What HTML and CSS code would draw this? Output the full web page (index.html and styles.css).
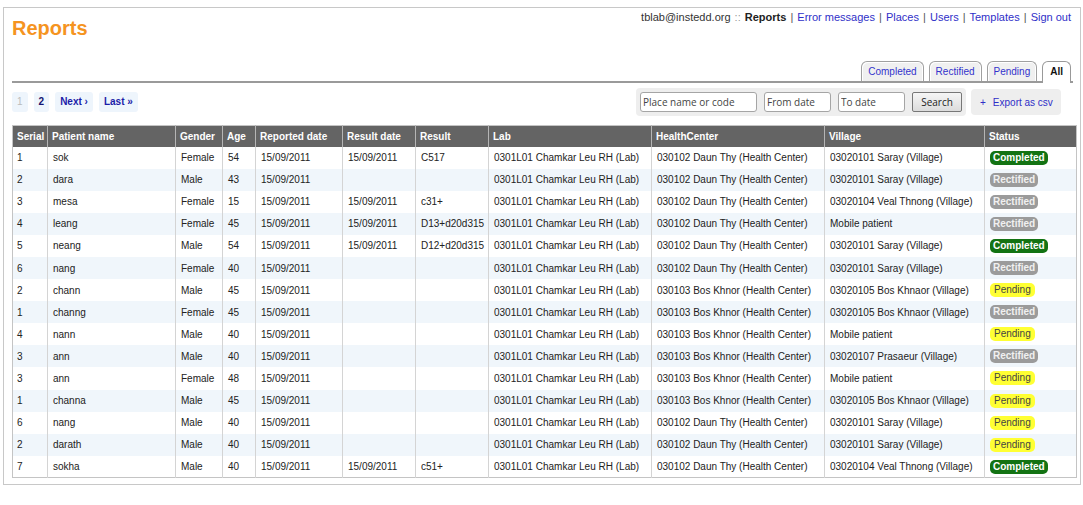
FILE: index.html
```html
<!DOCTYPE html>
<html>
<head>
<meta charset="utf-8">
<title>Reports</title>
<link rel="stylesheet" href="styles.css">
</head>
<body>
<div class="page">
  <div class="top">
    <h1 class="title">Reports</h1>
    <div class="userbar">
      <span class="user">tblab@instedd.org</span> <span class="sep2">::</span>
      <b class="current">Reports</b> <span class="sep">|</span>
      <a href="#">Error messages</a> <span class="sep">|</span>
      <a href="#">Places</a> <span class="sep">|</span>
      <a href="#">Users</a> <span class="sep">|</span>
      <a href="#">Templates</a> <span class="sep">|</span>
      <a href="#">Sign out</a>
    </div>
  </div>
  <div class="tabs">
    <a class="tab" href="#">Completed</a>
    <a class="tab" href="#">Rectified</a>
    <a class="tab" href="#">Pending</a>
    <a class="tab active" href="#">All</a>
  </div>
  <div class="toolbar">
    <div class="pager">
      <span class="pg disabled">1</span>
      <a class="pg cur" href="#">2</a>
      <a class="pg" href="#">Next ›</a>
      <a class="pg" href="#">Last »</a>
    </div>
    <div class="search">
      <input class="inp w-place" type="text" placeholder="Place name or code">
      <input class="inp w-date" type="text" placeholder="From date">
      <input class="inp w-date2" type="text" placeholder="To date">
      <button class="btn" type="button">Search</button>
    </div>
    <a class="export" href="#"><span class="plus">+</span>Export as csv</a>
  </div>
  <table class="grid">
    <colgroup>
      <col class="c-serial"><col class="c-name"><col class="c-gender"><col class="c-age"><col class="c-rep"><col class="c-resd"><col class="c-res"><col class="c-lab"><col class="c-hc"><col class="c-vil"><col class="c-st">
    </colgroup>
    <thead>
      <tr><th>Serial</th><th>Patient name</th><th>Gender</th><th>Age</th><th>Reported date</th><th>Result date</th><th>Result</th><th>Lab</th><th>HealthCenter</th><th>Village</th><th>Status</th></tr>
    </thead>
    <tbody>
      <tr><td>1</td><td>sok</td><td>Female</td><td>54</td><td>15/09/2011</td><td>15/09/2011</td><td>C517</td><td>0301L01 Chamkar Leu RH (Lab)</td><td>030102 Daun Thy (Health Center)</td><td>03020101 Saray (Village)</td><td><span class="badge completed">Completed</span></td></tr>
      <tr><td>2</td><td>dara</td><td>Male</td><td>43</td><td>15/09/2011</td><td></td><td></td><td>0301L01 Chamkar Leu RH (Lab)</td><td>030102 Daun Thy (Health Center)</td><td>03020101 Saray (Village)</td><td><span class="badge rectified">Rectified</span></td></tr>
      <tr><td>3</td><td>mesa</td><td>Female</td><td>15</td><td>15/09/2011</td><td>15/09/2011</td><td>c31+</td><td>0301L01 Chamkar Leu RH (Lab)</td><td>030102 Daun Thy (Health Center)</td><td>03020104 Veal Thnong (Village)</td><td><span class="badge rectified">Rectified</span></td></tr>
      <tr><td>4</td><td>leang</td><td>Female</td><td>45</td><td>15/09/2011</td><td>15/09/2011</td><td>D13+d20d315</td><td>0301L01 Chamkar Leu RH (Lab)</td><td>030102 Daun Thy (Health Center)</td><td>Mobile patient</td><td><span class="badge rectified">Rectified</span></td></tr>
      <tr><td>5</td><td>neang</td><td>Male</td><td>54</td><td>15/09/2011</td><td>15/09/2011</td><td>D12+d20d315</td><td>0301L01 Chamkar Leu RH (Lab)</td><td>030102 Daun Thy (Health Center)</td><td>03020101 Saray (Village)</td><td><span class="badge completed">Completed</span></td></tr>
      <tr><td>6</td><td>nang</td><td>Female</td><td>40</td><td>15/09/2011</td><td></td><td></td><td>0301L01 Chamkar Leu RH (Lab)</td><td>030102 Daun Thy (Health Center)</td><td>03020101 Saray (Village)</td><td><span class="badge rectified">Rectified</span></td></tr>
      <tr><td>2</td><td>chann</td><td>Male</td><td>45</td><td>15/09/2011</td><td></td><td></td><td>0301L01 Chamkar Leu RH (Lab)</td><td>030103 Bos Khnor (Health Center)</td><td>03020105 Bos Khnaor (Village)</td><td><span class="badge pending">Pending</span></td></tr>
      <tr><td>1</td><td>channg</td><td>Female</td><td>45</td><td>15/09/2011</td><td></td><td></td><td>0301L01 Chamkar Leu RH (Lab)</td><td>030103 Bos Khnor (Health Center)</td><td>03020105 Bos Khnaor (Village)</td><td><span class="badge rectified">Rectified</span></td></tr>
      <tr><td>4</td><td>nann</td><td>Male</td><td>40</td><td>15/09/2011</td><td></td><td></td><td>0301L01 Chamkar Leu RH (Lab)</td><td>030103 Bos Khnor (Health Center)</td><td>Mobile patient</td><td><span class="badge pending">Pending</span></td></tr>
      <tr><td>3</td><td>ann</td><td>Male</td><td>40</td><td>15/09/2011</td><td></td><td></td><td>0301L01 Chamkar Leu RH (Lab)</td><td>030103 Bos Khnor (Health Center)</td><td>03020107 Prasaeur (Village)</td><td><span class="badge rectified">Rectified</span></td></tr>
      <tr><td>3</td><td>ann</td><td>Female</td><td>48</td><td>15/09/2011</td><td></td><td></td><td>0301L01 Chamkar Leu RH (Lab)</td><td>030103 Bos Khnor (Health Center)</td><td>Mobile patient</td><td><span class="badge pending">Pending</span></td></tr>
      <tr><td>1</td><td>channa</td><td>Male</td><td>45</td><td>15/09/2011</td><td></td><td></td><td>0301L01 Chamkar Leu RH (Lab)</td><td>030103 Bos Khnor (Health Center)</td><td>03020105 Bos Khnaor (Village)</td><td><span class="badge pending">Pending</span></td></tr>
      <tr><td>6</td><td>nang</td><td>Male</td><td>40</td><td>15/09/2011</td><td></td><td></td><td>0301L01 Chamkar Leu RH (Lab)</td><td>030102 Daun Thy (Health Center)</td><td>03020101 Saray (Village)</td><td><span class="badge pending">Pending</span></td></tr>
      <tr><td>2</td><td>darath</td><td>Male</td><td>40</td><td>15/09/2011</td><td></td><td></td><td>0301L01 Chamkar Leu RH (Lab)</td><td>030102 Daun Thy (Health Center)</td><td>03020101 Saray (Village)</td><td><span class="badge pending">Pending</span></td></tr>
      <tr><td>7</td><td>sokha</td><td>Male</td><td>40</td><td>15/09/2011</td><td>15/09/2011</td><td>c51+</td><td>0301L01 Chamkar Leu RH (Lab)</td><td>030102 Daun Thy (Health Center)</td><td>03020104 Veal Thnong (Village)</td><td><span class="badge completed">Completed</span></td></tr>
    </tbody>
  </table>
</div>
</body>
</html>
```
FILE: styles.css
```css
* { box-sizing: border-box; }
body {
  margin: 0;
  background: #fff;
  font-family: "Liberation Sans", Arial, sans-serif;
  font-size: 10px;
  color: #222;
}
a { text-decoration: none; }

.page {
  margin: 7px 2px 0 3px;
  height: 478px;
  border: 1px solid #c8c8c8;
  padding: 0 3px 0 8px;
}

.top {
  display: flex;
  justify-content: space-between;
  align-items: flex-start;
  height: 53px;
}
.title {
  margin: 9px 0 0 0;
  font-size: 20px;
  line-height: 22px;
  font-weight: bold;
  color: #f5941f;
}
.userbar {
  margin-top: 2px;
  padding-right: 6px;
  font-size: 11px;
  line-height: 14px;
  color: #333;
  white-space: nowrap;
}
.userbar a { color: #2f2fc8; }
.userbar .current { color: #222; }
.userbar .sep { color: #555; padding: 0 1px; }
.userbar .sep2 { color: #999; padding: 0 1px; }

.tabs {
  display: flex;
  justify-content: flex-end;
  gap: 5px;
  height: 22px;
  margin-right: 4px;
  padding-right: 2px;
  border-bottom: 2px solid #9a9a9a;
}
.tab {
  display: block;
  height: 20px;
  line-height: 19px;
  padding: 0 6px;
  border: 1px solid #a0a0a0;
  border-bottom: none;
  border-radius: 6px 6px 0 0;
  background: #f0f0f0;
  box-shadow: inset 1px 1px 0 #fff, inset -1px 0 0 #fff;
  color: #3333cc;
}
.tab.active {
  height: 22px;
  margin-bottom: -2px;
  background: #fff;
  color: #111;
  font-weight: bold;
  padding: 0 7px;
  border-color: #999;
}

.toolbar {
  display: flex;
  align-items: center;
  height: 38px;
  padding-right: 16px;
}
.pager {
  display: flex;
  gap: 6px;
}
.pg {
  display: block;
  height: 20px;
  line-height: 20px;
  padding: 0 5px;
  background: #eef5fc;
  border-radius: 3px;
  color: #1c1ca8;
  font-weight: bold;
}
.pg.disabled { color: #bbb; font-weight: normal; }
.pg.cur { color: #141470; }

.search {
  margin-left: auto;
  display: flex;
  align-items: center;
  gap: 7px;
  height: 28px;
  padding: 0 4px;
  background: #eeeeee;
  border-radius: 4px;
}
.inp {
  height: 20px;
  border: 1px solid #a5a5a5;
  border-radius: 3px;
  padding: 0 2px;
  font-family: "Open Sans", "DejaVu Sans", sans-serif;
  font-size: 10px;
  color: #333;
  background: #fff;
}
.inp::placeholder { color: #444; }
.w-place { width: 117px; }
.w-date { width: 67px; }
.w-date2 { width: 67px; }
.btn {
  width: 50px;
  height: 20px;
  padding: 0;
  border: 1px solid #777;
  border-radius: 2px;
  background: linear-gradient(#f6f6f6, #dcdcdc);
  font-family: "Open Sans", "DejaVu Sans", sans-serif;
  font-size: 10px;
  color: #222;
}
.export {
  margin-left: 5px;
  display: flex;
  align-items: center;
  width: 90px;
  height: 26px;
  padding-left: 9px;
  background: #eeeeee;
  border-radius: 4px;
  color: #2f2fc8;
}
.plus { margin-right: 7px; }

.grid {
  margin-top: 4px;
  width: 1064px;
  border-collapse: collapse;
  table-layout: fixed;
  border: 1px solid #c4c4c4;
}
.c-serial { width: 35px; }
.c-name { width: 128px; }
.c-gender { width: 47px; }
.c-age { width: 33px; }
.c-rep { width: 87px; }
.c-resd { width: 73px; }
.c-res { width: 73px; }
.c-lab { width: 163px; }
.c-hc { width: 173px; }
.c-vil { width: 160px; }
.c-st { width: 92px; }

.grid th {
  height: 21px;
  padding: 0 4px;
  background: #646464;
  color: #fff;
  font-weight: bold;
  text-align: left;
  border-left: 1px solid #b5b5b5;
  white-space: nowrap;
}
.grid th:first-child { border-left: none; }
.grid td {
  height: 22.1px;
  padding: 0 5px;
  border-left: 1px solid #d4d4d4;
  white-space: nowrap;
  overflow: hidden;
  color: #222;
}
.grid td:first-child { border-left: none; padding-left: 4px; }
.grid tbody tr:nth-child(even) td { background: #f0f6fb; }

.badge {
  display: inline-block;
  line-height: 12px;
  padding: 1px 3px;
  border-radius: 5px;
  font-weight: bold;
}
.badge.completed {
  background: #137313;
  color: #fff;
}
.badge.rectified {
  background: #9b9b9b;
  color: #f0f0f0;
}
.badge.pending {
  background: #ffff33;
  color: #444;
  font-weight: normal;
  padding: 1px 4px;
}
```
